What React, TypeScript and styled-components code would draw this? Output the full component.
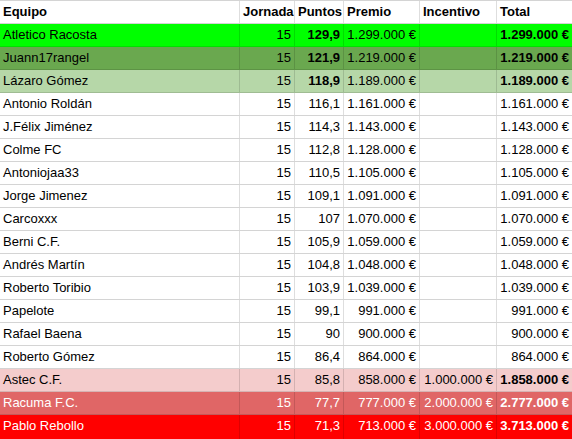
import React from 'react'
import styled, { createGlobalStyle } from 'styled-components'

const GlobalStyle = createGlobalStyle`
  html, body {
    margin: 0;
    padding: 0;
    background: #ffffff;
  }
  body {
    font-family: "Liberation Sans", Arial, sans-serif;
    font-size: 13px;
    color: #000000;
  }
`

type Team = {
  name: string
  points: string
  prize: string
  bonus?: string
  total: string
  bg?: string
  light?: boolean
  boldPoints?: boolean
  boldTotal?: boolean
}

const teams: Team[] = [
  { name: 'Atletico Racosta', points: '129,9', prize: '1.299.000 €', total: '1.299.000 €', bg: '#00ff00', boldPoints: true, boldTotal: true },
  { name: 'Juann17rangel', points: '121,9', prize: '1.219.000 €', total: '1.219.000 €', bg: '#6aa84f', boldPoints: true, boldTotal: true },
  { name: 'Lázaro Gómez', points: '118,9', prize: '1.189.000 €', total: '1.189.000 €', bg: '#b6d7a8', boldPoints: true, boldTotal: true },
  { name: 'Antonio Roldán', points: '116,1', prize: '1.161.000 €', total: '1.161.000 €' },
  { name: 'J.Félix Jiménez', points: '114,3', prize: '1.143.000 €', total: '1.143.000 €' },
  { name: 'Colme FC', points: '112,8', prize: '1.128.000 €', total: '1.128.000 €' },
  { name: 'Antoniojaa33', points: '110,5', prize: '1.105.000 €', total: '1.105.000 €' },
  { name: 'Jorge Jimenez', points: '109,1', prize: '1.091.000 €', total: '1.091.000 €' },
  { name: 'Carcoxxx', points: '107', prize: '1.070.000 €', total: '1.070.000 €' },
  { name: 'Berni C.F.', points: '105,9', prize: '1.059.000 €', total: '1.059.000 €' },
  { name: 'Andrés Martín', points: '104,8', prize: '1.048.000 €', total: '1.048.000 €' },
  { name: 'Roberto Toribio', points: '103,9', prize: '1.039.000 €', total: '1.039.000 €' },
  { name: 'Papelote', points: '99,1', prize: '991.000 €', total: '991.000 €' },
  { name: 'Rafael Baena', points: '90', prize: '900.000 €', total: '900.000 €' },
  { name: 'Roberto Gómez', points: '86,4', prize: '864.000 €', total: '864.000 €' },
  { name: 'Astec C.F.', points: '85,8', prize: '858.000 €', bonus: '1.000.000 €', total: '1.858.000 €', bg: '#f4cccc', boldTotal: true },
  { name: 'Racuma F.C.', points: '77,7', prize: '777.000 €', bonus: '2.000.000 €', total: '2.777.000 €', bg: '#e06666', light: true, boldTotal: true },
  { name: 'Pablo Rebollo', points: '71,3', prize: '713.000 €', bonus: '3.000.000 €', total: '3.713.000 €', bg: '#ff0000', light: true, boldTotal: true },
]

function Standings() {
  return (
    <Sheet>
      <Row>
        <Cell bold>Equipo</Cell>
        <Cell bold>Jornada</Cell>
        <Cell bold>Puntos</Cell>
        <Cell bold>Premio</Cell>
        <Cell bold>Incentivo</Cell>
        <Cell bold>Total</Cell>
      </Row>
      {teams.map((t) => (
        <Row key={t.name} $bg={t.bg} $light={t.light}>
          <Cell>{t.name}</Cell>
          <Cell right>15</Cell>
          <Cell right bold={t.boldPoints}>{t.points}</Cell>
          <Cell right>{t.prize}</Cell>
          <Cell right>{t.bonus}</Cell>
          <Cell right bold={t.boldTotal}>{t.total}</Cell>
        </Row>
      ))}
    </Sheet>
  )
}

export default function App() {
  return (
    <>
      <GlobalStyle />
      <Standings />
    </>
  )
}

const Sheet = styled.div`
  width: 572px;
  border-top: 1px solid #d4d4d4;
  overflow: hidden;
`

const Row = styled.div<{ $bg?: string; $light?: boolean }>`
  display: grid;
  grid-template-columns: 240px 55px 49px 76px 77px 75px;
  height: 23px;
  background: ${(p) => p.$bg || '#ffffff'};
  color: ${(p) => (p.$light ? '#ffffff' : '#000000')};
  border-bottom: 1px solid ${(p) => (p.$bg ? 'rgba(0, 0, 0, 0.12)' : '#d4d4d4')};
  box-sizing: border-box;

  &:last-child {
    height: 24px;
    border-bottom: none;
  }
`

const Cell = styled.div<{ right?: boolean; bold?: boolean }>`
  line-height: 22px;
  padding: 0 3px;
  white-space: nowrap;
  overflow: hidden;
  text-align: ${(p) => (p.right ? 'right' : 'left')};
  font-weight: ${(p) => (p.bold ? 700 : 400)};
  border-right: 1px solid rgba(0, 0, 0, 0.13);

  &:last-child {
    border-right: none;
  }
`
